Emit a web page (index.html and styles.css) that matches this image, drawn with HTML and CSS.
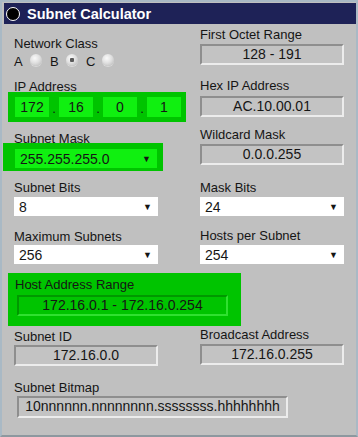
FILE: index.html
```html
<!DOCTYPE html>
<html lang="en">
<head>
  <meta charset="UTF-8" />
  <title>Subnet Calculator</title>
  <link rel="stylesheet" href="styles.css">
</head>
<body>
  <div class="window">
    <div class="titlebar">
      <span class="title-icon"></span>
      <span class="title">Subnet Calculator</span>
    </div>

    <div class="form">
      <!-- row 1 -->
      <div class="cell netclass">
        <div class="label">Network Class</div>
        <div class="radios">
          <span>A</span><span class="radio"></span>
          <span>B</span><span class="radio on"></span>
          <span>C</span><span class="radio"></span>
        </div>
      </div>
      <div class="cell octet">
        <div class="label">First Octet Range</div>
        <div class="field">128 - 191</div>
      </div>

      <!-- row 2 -->
      <div class="cell ip">
        <div class="label">IP Address</div>
        <div class="green ip-box">
          <div class="octet-in">172</div><span class="dot">.</span>
          <div class="octet-in">16</div><span class="dot">.</span>
          <div class="octet-in">0</div><span class="dot">.</span>
          <div class="octet-in">1</div>
        </div>
      </div>
      <div class="cell hex">
        <div class="label">Hex IP Address</div>
        <div class="field">AC.10.00.01</div>
      </div>

      <!-- row 3 -->
      <div class="cell mask">
        <div class="label">Subnet Mask</div>
        <div class="green mask-box">
          <div class="select green-select"><span>255.255.255.0</span><span class="arrow">&#9660;</span></div>
        </div>
      </div>
      <div class="cell wildcard">
        <div class="label">Wildcard Mask</div>
        <div class="field">0.0.0.255</div>
      </div>

      <!-- row 4 -->
      <div class="cell bits">
        <div class="label">Subnet Bits</div>
        <div class="select"><span>8</span><span class="arrow">&#9660;</span></div>
      </div>
      <div class="cell bits">
        <div class="label">Mask Bits</div>
        <div class="select"><span>24</span><span class="arrow">&#9660;</span></div>
      </div>

      <!-- row 5 -->
      <div class="cell counts">
        <div class="label">Maximum Subnets</div>
        <div class="select"><span>256</span><span class="arrow">&#9660;</span></div>
      </div>
      <div class="cell counts hosts">
        <div class="label">Hosts per Subnet</div>
        <div class="select"><span>254</span><span class="arrow">&#9660;</span></div>
      </div>

      <!-- row 6 -->
      <div class="cell range wide">
        <div class="green range-box">
          <div class="label">Host Address Range</div>
          <div class="field green-field">172.16.0.1 - 172.16.0.254</div>
        </div>
      </div>

      <!-- row 7 -->
      <div class="cell subnet-id">
        <div class="label">Subnet ID</div>
        <div class="field">172.16.0.0</div>
      </div>
      <div class="cell broadcast">
        <div class="label">Broadcast Address</div>
        <div class="field">172.16.0.255</div>
      </div>

      <!-- row 8 -->
      <div class="cell bitmap wide">
        <div class="label">Subnet Bitmap</div>
        <div class="field bitmap-field">10nnnnnn.nnnnnnnn.ssssssss.hhhhhhhh</div>
      </div>
    </div>
  </div>
</body>
</html>
```

FILE: styles.css
```css
body {
  margin: 0;
  font-family: "Liberation Sans", Arial, sans-serif;
  font-size: 13px;
  color: #151515;
  background: #c0c0c0;
}
.window {
  width: 358px;
  height: 437px;
  box-sizing: border-box;
  border: 2px solid #a9b9c5;
  border-bottom-color: #8d989f;
  background: #c0c0c0;
  overflow: hidden;
}
.titlebar {
  margin: 1px 0 0 2px;
  height: 21px;
  background: #1e2257;
  display: flex;
  align-items: center;
  padding-left: 2px;
}
.title-icon {
  width: 12px;
  height: 12px;
  border: 1.5px solid #fff;
  border-radius: 50%;
  background: #000;
  margin-right: 7px;
}
.title {
  color: #fff;
  font-weight: bold;
  font-size: 14.5px;
}

/* form grid */
.form {
  display: grid;
  grid-template-columns: 186px 145px;
  grid-template-rows: 50px 50px 50px 50px 46px 58px 42px auto;
  padding-left: 12px;
}
.cell {
  display: flex;
  flex-direction: column;
  align-items: flex-start;
}
.wide {
  grid-column: 1 / -1;
}
.label {
  line-height: 14px;
  height: 14px;
  white-space: nowrap;
}
.field {
  box-sizing: border-box;
  width: 144px;
  height: 21px;
  border-style: solid;
  border-width: 2px;
  border-color: #8e8e8e #ececec #ececec #8e8e8e;
  background: #c3c3c3;
  text-align: center;
  font-size: 14px;
  line-height: 17px;
}
.select {
  box-sizing: border-box;
  width: 144px;
  height: 19px;
  background: #fff;
  display: flex;
  align-items: center;
  justify-content: space-between;
  padding: 0 6px 0 5px;
  font-size: 14px;
}
.arrow {
  font-size: 9px;
}
.green {
  background: #00c400;
  box-sizing: border-box;
}

/* row 1 */
.netclass { padding-top: 13px; }
.radios {
  display: flex;
  align-items: center;
  margin-top: 4px;
  height: 14px;
}
.radios span:not(.radio) {
  width: 9px;
  margin-right: 7px;
  line-height: 14px;
}
.radio {
  width: 12px;
  height: 12px;
  border-radius: 50%;
  margin-right: 8px;
  margin-top: -4px;
  background: radial-gradient(circle at 40% 35%, #fafafa 0, #e0e0e0 45%, #b4b4b4 100%);
  box-shadow: 0 1px 0 #d8d8d8;
}
.radio.on {
  background:
    radial-gradient(circle at 50% 50%, #5a5a5a 0, #5a5a5a 2px, transparent 2.5px),
    radial-gradient(circle at 40% 35%, #fafafa 0, #e0e0e0 45%, #b4b4b4 100%);
}
.octet { padding-top: 4px; }
.octet .field { margin-top: 2px; }

/* row 2 */
.ip { padding-top: 6px; }
.ip-box {
  margin: -2px 0 0 -6px;
  width: 178px;
  height: 30px;
  padding: 5px 5px 5px 7px;
  display: flex;
  align-items: center;
}
.octet-in {
  width: 34px;
  height: 20px;
  background: #10f010;
  text-align: center;
  line-height: 20px;
  font-size: 14px;
}
.dot {
  width: 10px;
  text-align: center;
  line-height: 20px;
  padding-top: 3px;
}
.hex { padding-top: 5px; }
.hex .field { margin-top: 3px; }

/* row 3 */
.mask { padding-top: 8px; }
.mask-box {
  margin: -3px 0 0 -11px;
  width: 160px;
  height: 28px;
  padding: 6px 0 0 12px;
}
.green-select {
  background: #10f010;
  width: 142px;
}
.wildcard { padding-top: 4px; }
.wildcard .field { margin-top: 2px; }

/* rows 4 and 5 */
.bits { padding-top: 7px; }
.bits .select { margin-top: 2px; }
.counts { padding-top: 6px; }
.counts .select { margin-top: 1px; }
.hosts { padding-top: 5px; }
.hosts .select { margin-top: 2px; }

/* row 6 */
.range { padding-top: 3px; }
.range-box {
  margin-left: -6px;
  width: 233px;
  height: 53px;
  padding: 5px 0 0 7px;
}
.range-box .field {
  margin: 3px 0 0 2px;
  width: 211px;
}
.green-field {
  background: #00c400;
  border-color: #009800 #30e030 #30e030 #009800;
}

/* row 7 */
.subnet-id { padding-top: 2px; }
.subnet-id .field { margin-top: 1px; }
.broadcast .field { margin-top: 2px; }

/* row 8 */
.bitmap { padding-top: 11px; }
.bitmap-field {
  margin: 1px 0 0 3px;
  width: 271px;
  height: 22px;
}
```
